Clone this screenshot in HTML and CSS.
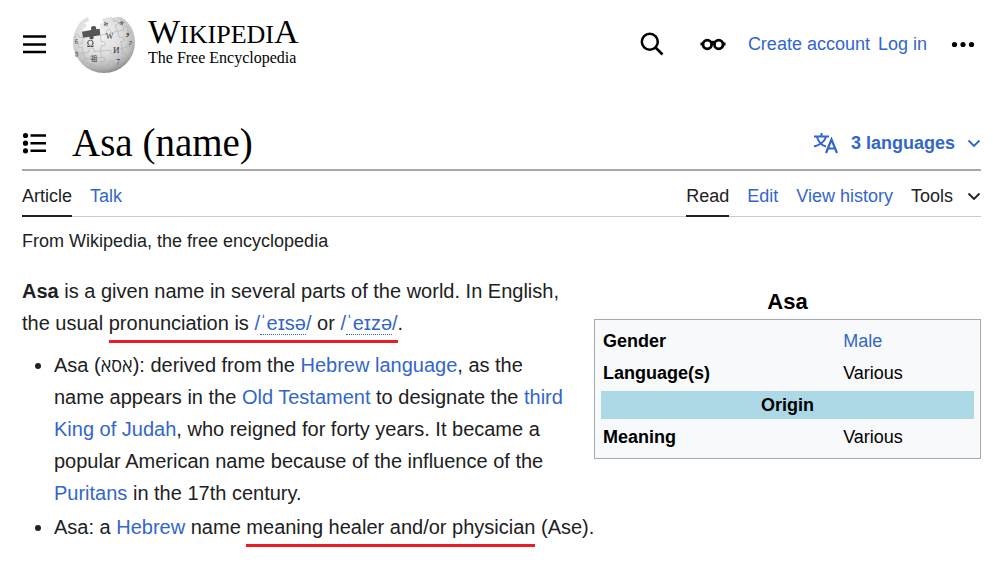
FILE: index.html
```html
<!DOCTYPE html>
<html lang="en">
<head>
<meta charset="utf-8">
<meta name="viewport" content="width=device-width, initial-scale=1">
<title>Asa (name) - Wikipedia</title>
<link rel="stylesheet" href="styles.css">
</head>
<body>
<header class="site-header">
  <button class="icon-button" type="button" aria-label="Main menu">
    <svg width="24" height="24" viewBox="0 0 24 24"><path d="M1 4.5h23M1 12.5h23M1 20h23" stroke="currentColor" stroke-width="2.4" fill="none"/></svg>
  </button>
  <a class="brand" href="#">
    <svg class="globe" width="63" height="57" viewBox="24 22 189 171" aria-hidden="true">
      <defs>
        <radialGradient id="ball" cx="42%" cy="32%" r="72%">
          <stop offset="0" stop-color="#f4f4f4"/><stop offset=".5" stop-color="#dedede"/><stop offset=".8" stop-color="#bababa"/><stop offset="1" stop-color="#808080"/>
        </radialGradient>
      </defs>
      <path d="M72 25 C62 30 48 38 41 53 C31 68 27 84 27 101 A93 92 0 0 0 213 101 C213 68 197 41 172 26 L160 24 L147 28 Q139 22 136 26 L116 30 Q112 34 117 39 Q120 45 112 44 L108 47 L110 60 L97 63 Q100 53 91 51 Q82 51 85 64 L58 67 L59 58 Q67 59 68 52 Q68 44 60 46 Q66 39 75 38 Z" fill="url(#ball)"/>
      <path d="M54 69 L82 64 Q78 53 89 52 Q99 53 96 62 L107 60 L109 80 L88 83 Q92 91 83 92 Q74 92 77 84 L57 87 Z" fill="#555"/>
      <path d="M57 87 L55 106 Q43 99 42 111 Q43 121 54 115 L57 133 L76 130 Q72 119 83 118 Q94 119 89 129 L110 127 L112 110 Q123 116 125 105 Q124 95 112 100 L109 80 L128 75 Q124 65 134 62 Q144 64 139 73 L160 68 L153 50 Q165 48 162 39 Q157 31 150 40 L147 28 M160 68 L167 87 Q178 82 180 92 Q179 102 170 98 L174 119 L153 123 Q157 134 146 136 Q136 135 141 125 L110 127 L112 147 Q124 143 124 154 Q121 162 112 157 L111 176 L91 175 Q93 166 84 166 Q76 167 80 174 M57 133 L65 151 Q54 155 58 162 Q63 168 70 161 L80 174 M112 147 L91 149 Q94 139 85 139 Q77 141 80 150 L65 151 M174 119 L176 136 Q187 132 187 143 Q184 151 174 146 L169 163 L148 168 Q150 157 141 156 Q132 158 136 169 L111 176 M160 68 L179 64 Q176 53 186 54 Q195 57 190 67 L204 75 M174 119 L192 114 Q190 105 199 104 Q207 107 202 114 L211 114 M57 87 L45 86 Q46 77 39 76 Q33 79 35 86 L29 87 M57 133 L43 137 L33 129" fill="none" stroke="#a6a6a6" stroke-width="1.600"/>
      <g class="globe-letters">
        <text x="68" y="115" font-size="29">Ω</text>
        <text x="125" y="92" font-size="24">W</text>
        <text x="147" y="134" font-size="27">И</text>
        <text x="80" y="156" font-size="20">祖</text>
        <text x="157" y="168" font-size="22">7</text>
        <text x="32" y="106" font-size="18">წ</text>
        <text x="33" y="139" font-size="18">ვ</text>
        <text x="118" y="49" font-size="20" transform="rotate(22 118 49)">ท</text>
        <text x="163" y="43" font-size="18" transform="rotate(35 163 43)">Ж</text>
        <text x="186" y="78" font-size="22">و</text>
        <text x="194" y="109" font-size="20">ק</text>
      </g>
    </svg>
    <span class="brand-text">
      <span class="wordmark">W<span class="wordmark-small">IKIPEDI</span>A</span>
      <span class="tagline">The Free Encyclopedia</span>
    </span>
  </a>
  <nav class="user-tools" aria-label="Personal tools">
    <button class="icon-button search-button" type="button" aria-label="Search">
      <svg width="24" height="24" viewBox="0 0 24 24"><circle cx="9.800" cy="9.800" r="8" fill="none" stroke="currentColor" stroke-width="2.500"/><path d="M15.500 15.500l7 7" stroke="currentColor" stroke-width="2.600"/></svg>
    </button>
    <button class="icon-button glasses-button" type="button" aria-label="Appearance">
      <svg width="26" height="24" viewBox="0 0 26 24" fill="none" stroke="currentColor" stroke-width="2.800"><circle cx="7.300" cy="12.500" r="4.300"/><circle cx="18.700" cy="12.500" r="4.300"/><path d="M.5 12h3M22.500 12h3M11 11q2-1.500 4 0"/></svg>
    </button>
    <a href="#">Create account</a>
    <a href="#">Log in</a>
    <button class="icon-button more-button" type="button" aria-label="More options">
      <svg width="24" height="24" viewBox="0 0 24 24" fill="currentColor"><circle cx="3.500" cy="12.500" r="2.600"/><circle cx="12" cy="12.500" r="2.600"/><circle cx="20.500" cy="12.500" r="2.600"/></svg>
    </button>
  </nav>
</header>
<main class="page">
  <div class="title-bar">
    <button class="icon-button" type="button" aria-label="Table of contents">
      <svg width="24" height="24" viewBox="0 0 24 24"><g fill="currentColor"><circle cx="3.500" cy="4.500" r="2.600"/><circle cx="3.500" cy="12.200" r="2.600"/><circle cx="3.500" cy="19.800" r="2.600"/></g><path d="M8.500 4.500H24M8.500 12.200H24M8.500 19.800H24" stroke="currentColor" stroke-width="2.400"/></svg>
    </button>
    <h1>Asa (name)</h1>
    <button class="languages" type="button">
      <svg width="26" height="22" viewBox="0 0 26 22" fill="none" stroke="currentColor" stroke-width="2"><path d="M1 4.500h15M8.500 1v3.500M4 5q2.500 8 9 9.500M13 5Q10.500 12 1 14.500"/><path d="M13 21l5.500-13.500L24 21M15 16.500h7" stroke-width="2.200"/></svg>
      <span>3 languages</span>
      <svg class="chevron" width="14" height="14" viewBox="0 0 14 14"><path d="M1.500 4.500L7 10l5.500-5.500" fill="none" stroke="currentColor" stroke-width="1.900"/></svg>
    </button>
  </div>
  <div class="tabs">
    <nav class="tab-group" aria-label="Namespaces">
      <a class="tab selected" href="#">Article</a>
      <a class="tab" href="#">Talk</a>
    </nav>
    <nav class="tab-group" aria-label="Views">
      <a class="tab selected" href="#">Read</a>
      <a class="tab" href="#">Edit</a>
      <a class="tab" href="#">View history</a>
      <button class="tab tools" type="button">Tools
        <svg class="chevron" width="14" height="14" viewBox="0 0 14 14"><path d="M1.500 4.500L7 10l5.500-5.500" fill="none" stroke="currentColor" stroke-width="1.900"/></svg>
      </button>
    </nav>
  </div>
  <p class="site-sub">From Wikipedia, the free encyclopedia</p>
  <div class="content">
    <article class="article">
      <p><b>Asa</b> is a given name in several parts of the world. In English, the usual <span class="marked">pronunciation is <a href="#">/<span class="ipa">ˈeɪsə</span>/</a> or <a href="#">/<span class="ipa">ˈeɪzə</span>/</a></span>.</p>
      <ul>
        <li>Asa (<bdi class="hebrew" lang="he">אסא</bdi>): derived from the <a href="#">Hebrew language</a>, as the name appears in the <a href="#">Old Testament</a> to designate the <a href="#">third King of Judah</a>, who reigned for forty years. It became a popular American name because of the influence of the <a href="#">Puritans</a> in the 17th century.</li>
        <li class="one-line">Asa: a <a href="#">Hebrew</a> name <span class="marked">meaning healer and/or physician</span> (Ase).</li>
      </ul>
    </article>
    <table class="infobox">
      <caption>Asa</caption>
      <tbody>
        <tr><th class="label" scope="row">Gender</th><td><a href="#">Male</a></td></tr>
        <tr><th class="label" scope="row">Language(s)</th><td>Various</td></tr>
        <tr><th class="section" colspan="2">Origin</th></tr>
        <tr><th class="label" scope="row">Meaning</th><td>Various</td></tr>
      </tbody>
    </table>
  </div>
</main>
</body>
</html>
```
FILE: styles.css
```css
* {
  box-sizing: border-box;
}

body {
  margin: 0;
  background: #fff;
  color: #202122;
  font-family: "Liberation Sans", Arial, sans-serif;
  font-size: 18px;
  line-height: 24px;
}

a {
  color: #3366cc;
  text-decoration: none;
}

button {
  padding: 0;
  border: 0;
  background: none;
  font: inherit;
  cursor: pointer;
}

svg {
  display: block;
  flex: none;
}

.icon-button {
  color: #000;
}

.site-header {
  display: flex;
  align-items: center;
  height: 88px;
  padding: 0 18px 0 22px;
}

.brand {
  display: flex;
  align-items: center;
  gap: 13px;
  margin-left: 26px;
  color: #000;
  font-family: "Liberation Serif", serif;
}

.globe-letters {
  fill: #333;
  font-family: "Liberation Serif", "Noto Sans CJK SC", "DejaVu Sans", serif;
}

.brand-text {
  display: flex;
  flex-direction: column;
  padding-bottom: 2px;
}

.wordmark {
  font-size: 34px;
  line-height: 26px;
}

.wordmark-small {
  font-size: 26px;
}

.tagline {
  font-size: 16px;
  line-height: 20px;
}

.user-tools {
  display: flex;
  align-items: center;
  gap: 8px;
  margin-left: auto;
}

.glasses-button {
  margin: 0 14px 0 28px;
}

.more-button {
  margin-left: 16px;
}

.page {
  padding: 28px 12px 16px 22px;
}

.title-bar {
  display: flex;
  align-items: center;
  height: 55px;
  border-bottom: 2px solid #a2a9b1;
}

h1 {
  margin: 0 0 0 26px;
  color: #000;
  font-family: "Liberation Serif", serif;
  font-size: 39px;
  font-weight: 400;
  line-height: 48px;
}

.languages {
  display: flex;
  align-items: center;
  gap: 12px;
  margin-left: auto;
  color: #3366cc;
  font-weight: 700;
}

.tabs {
  display: flex;
  justify-content: space-between;
  height: 46px;
  border-bottom: 1px solid #c8ccd1;
}

.tab-group {
  display: flex;
  gap: 18px;
}

.tab {
  height: 46px;
  padding-top: 13px;
  border-bottom: 2px solid transparent;
}

.tab.selected {
  border-color: #202122;
  color: #202122;
}

.tools {
  display: flex;
  align-items: center;
  gap: 14px;
  height: 46px;
  padding-top: 6px;
  color: #202122;
}

.site-sub {
  margin: 12px 0 0;
}

.content {
  display: flex;
  align-items: flex-start;
  gap: 20px;
  margin-top: 22px;
}

.article {
  flex: 1;
  min-width: 0;
  font-size: 20px;
  line-height: 32px;
}

.article p {
  margin: 0;
}

.article ul {
  margin: 10px 0 0;
  padding-left: 32px;
}

.article li + li {
  margin-top: 2px;
}

.one-line {
  white-space: nowrap;
}

.marked {
  padding-bottom: 6px;
  border-bottom: 3px solid #ed1c24;
}

.hebrew {
  font-family: "Open Sans", "Liberation Sans", sans-serif;
  font-size: 18px;
  line-height: 24px;
}

.ipa {
  border-bottom: 1px dotted #3366cc;
}

.infobox {
  width: 387px;
  margin-top: 10px;
  padding: 3px 2px;
  border: 1px solid #a2a9b1;
  border-spacing: 4px;
  background: #f8f9fa;
  color: #000;
}

.infobox caption {
  padding: 2px 0;
  font-size: 22px;
  font-weight: 700;
  line-height: 30px;
}

.infobox th,
.infobox td {
  padding: 2px;
  text-align: left;
}

.infobox .label {
  width: 64%;
}

.infobox .section {
  background: #add8e6;
  text-align: center;
}
```
